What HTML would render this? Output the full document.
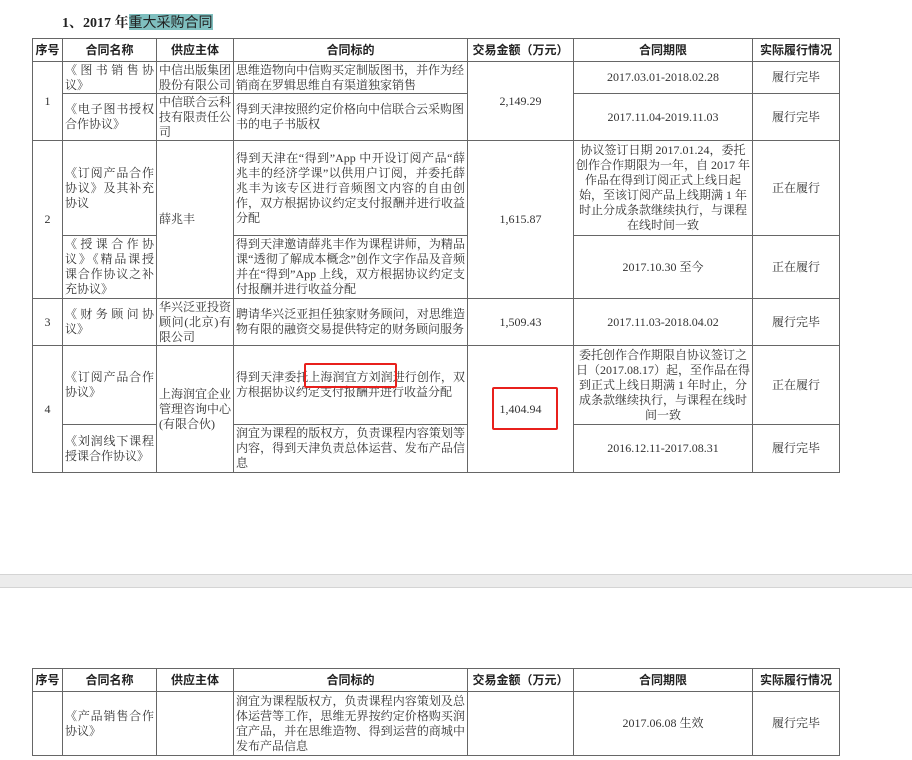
<!DOCTYPE html>
<html><head><meta charset="utf-8"><style>
body{margin:0;background:#fff;width:912px;height:760px;overflow:hidden;position:relative;font-family:"Liberation Serif","Noto Serif CJK SC",serif;color:#333;}
.t{position:absolute;left:32px;border-collapse:collapse;table-layout:fixed;font-size:12px;line-height:15px;}
.t td{border:1px solid #666;padding:0 2px;vertical-align:middle;overflow:hidden;}
.t th{border:1px solid #666;font-family:"Liberation Sans","Noto Sans CJK SC",sans-serif;font-weight:bold;font-size:12px;height:22px;padding:0;color:#222;}
.c{text-align:center}
.j{text-align:justify}
.title{position:absolute;left:62px;top:12px;font-size:14px;font-weight:bold;font-family:"Liberation Serif","Noto Serif CJK SC",serif;color:#222}
.hl{background:#7fbfbf;font-family:"Liberation Sans","Noto Sans CJK SC",sans-serif;font-weight:normal}
.box{position:absolute;border:2px solid #e8201c;border-radius:2px}
.sep{position:absolute;left:0;top:574px;width:912px;height:12px;background:#ececec;border-top:1px solid #d4d4d4;border-bottom:1px solid #d4d4d4}
</style></head><body>
<div class="title">1、2017 年<span class="hl">重大采购合同</span></div>
<table class="t" style="top:38px">
<colgroup><col style="width:30px"><col style="width:94px"><col style="width:77px"><col style="width:234px"><col style="width:106px"><col style="width:179px"><col style="width:87px"></colgroup>
<tr><th>序号</th><th>合同名称</th><th>供应主体</th><th>合同标的</th><th>交易金额（万元）</th><th>合同期限</th><th>实际履行情况</th></tr>
<tr style="height:32px"><td class="c" rowspan="2">1</td><td class="j">《图书销售协议》</td><td class="j">中信出版集团股份有限公司</td><td>思维造物向中信购买定制版图书，并作为经销商在罗辑思维自有渠道独家销售</td><td class="c" rowspan="2">2,149.29</td><td class="c">2017.03.01-2018.02.28</td><td class="c">履行完毕</td></tr>
<tr style="height:47px"><td class="j">《电子图书授权合作协议》</td><td>中信联合云科技有限责任公司</td><td>得到天津按照约定价格向中信联合云采购图书的电子书版权</td><td class="c">2017.11.04-2019.11.03</td><td class="c">履行完毕</td></tr>
<tr style="height:95px"><td class="c" rowspan="2">2</td><td class="j">《订阅产品合作协议》及其补充协议</td><td rowspan="2">薛兆丰</td><td class="j">得到天津在“得到”App 中开设订阅产品“薛兆丰的经济学课”以供用户订阅，并委托薛兆丰为该专区进行音频图文内容的自由创作，双方根据协议约定支付报酬并进行收益分配</td><td class="c" rowspan="2">1,615.87</td><td class="c">协议签订日期 2017.01.24，委托创作合作期限为一年，自 2017 年作品在得到订阅正式上线日起始，至该订阅产品上线期满 1 年时止分成条款继续执行，与课程在线时间一致</td><td class="c">正在履行</td></tr>
<tr style="height:63px"><td class="j">《授课合作协议》《精品课授课合作协议之补充协议》</td><td class="j">得到天津邀请薛兆丰作为课程讲师，为精品课“透彻了解成本概念”创作文字作品及音频并在“得到”App 上线，双方根据协议约定支付报酬并进行收益分配</td><td class="c">2017.10.30 至今</td><td class="c">正在履行</td></tr>
<tr style="height:47px"><td class="c">3</td><td class="j">《财务顾问协议》</td><td class="j">华兴泛亚投资顾问(北京)有限公司</td><td class="j">聘请华兴泛亚担任独家财务顾问，对思维造物有限的融资交易提供特定的财务顾问服务</td><td class="c">1,509.43</td><td class="c">2017.11.03-2018.04.02</td><td class="c">履行完毕</td></tr>
<tr style="height:79px"><td class="c" rowspan="2">4</td><td class="j">《订阅产品合作协议》</td><td rowspan="2">上海润宜企业管理咨询中心(有限合伙)</td><td class="j">得到天津委托上海润宜方刘润进行创作，双方根据协议约定支付报酬并进行收益分配</td><td class="c" rowspan="2">1,404.94</td><td class="c">委托创作合作期限自协议签订之日（2017.08.17）起，至作品在得到正式上线日期满 1 年时止，分成条款继续执行，与课程在线时间一致</td><td class="c">正在履行</td></tr>
<tr style="height:48px"><td class="j">《刘润线下课程授课合作协议》</td><td class="j">润宜为课程的版权方，负责课程内容策划等内容，得到天津负责总体运营、发布产品信息</td><td class="c">2016.12.11-2017.08.31</td><td class="c">履行完毕</td></tr>
</table>
<div class="box" style="left:304px;top:363px;width:89px;height:21px"></div>
<div class="box" style="left:492px;top:387px;width:62px;height:39px"></div>
<div class="sep"></div>
<table class="t" style="top:668px">
<colgroup><col style="width:30px"><col style="width:94px"><col style="width:77px"><col style="width:234px"><col style="width:106px"><col style="width:179px"><col style="width:87px"></colgroup>
<tr><th>序号</th><th>合同名称</th><th>供应主体</th><th>合同标的</th><th>交易金额（万元）</th><th>合同期限</th><th>实际履行情况</th></tr>
<tr style="height:64px"><td></td><td class="j">《产品销售合作协议》</td><td></td><td class="j">润宜为课程版权方，负责课程内容策划及总体运营等工作，思维无界按约定价格购买润宜产品，并在思维造物、得到运营的商城中发布产品信息</td><td></td><td class="c">2017.06.08 生效</td><td class="c">履行完毕</td></tr>
</table>
</body></html>
